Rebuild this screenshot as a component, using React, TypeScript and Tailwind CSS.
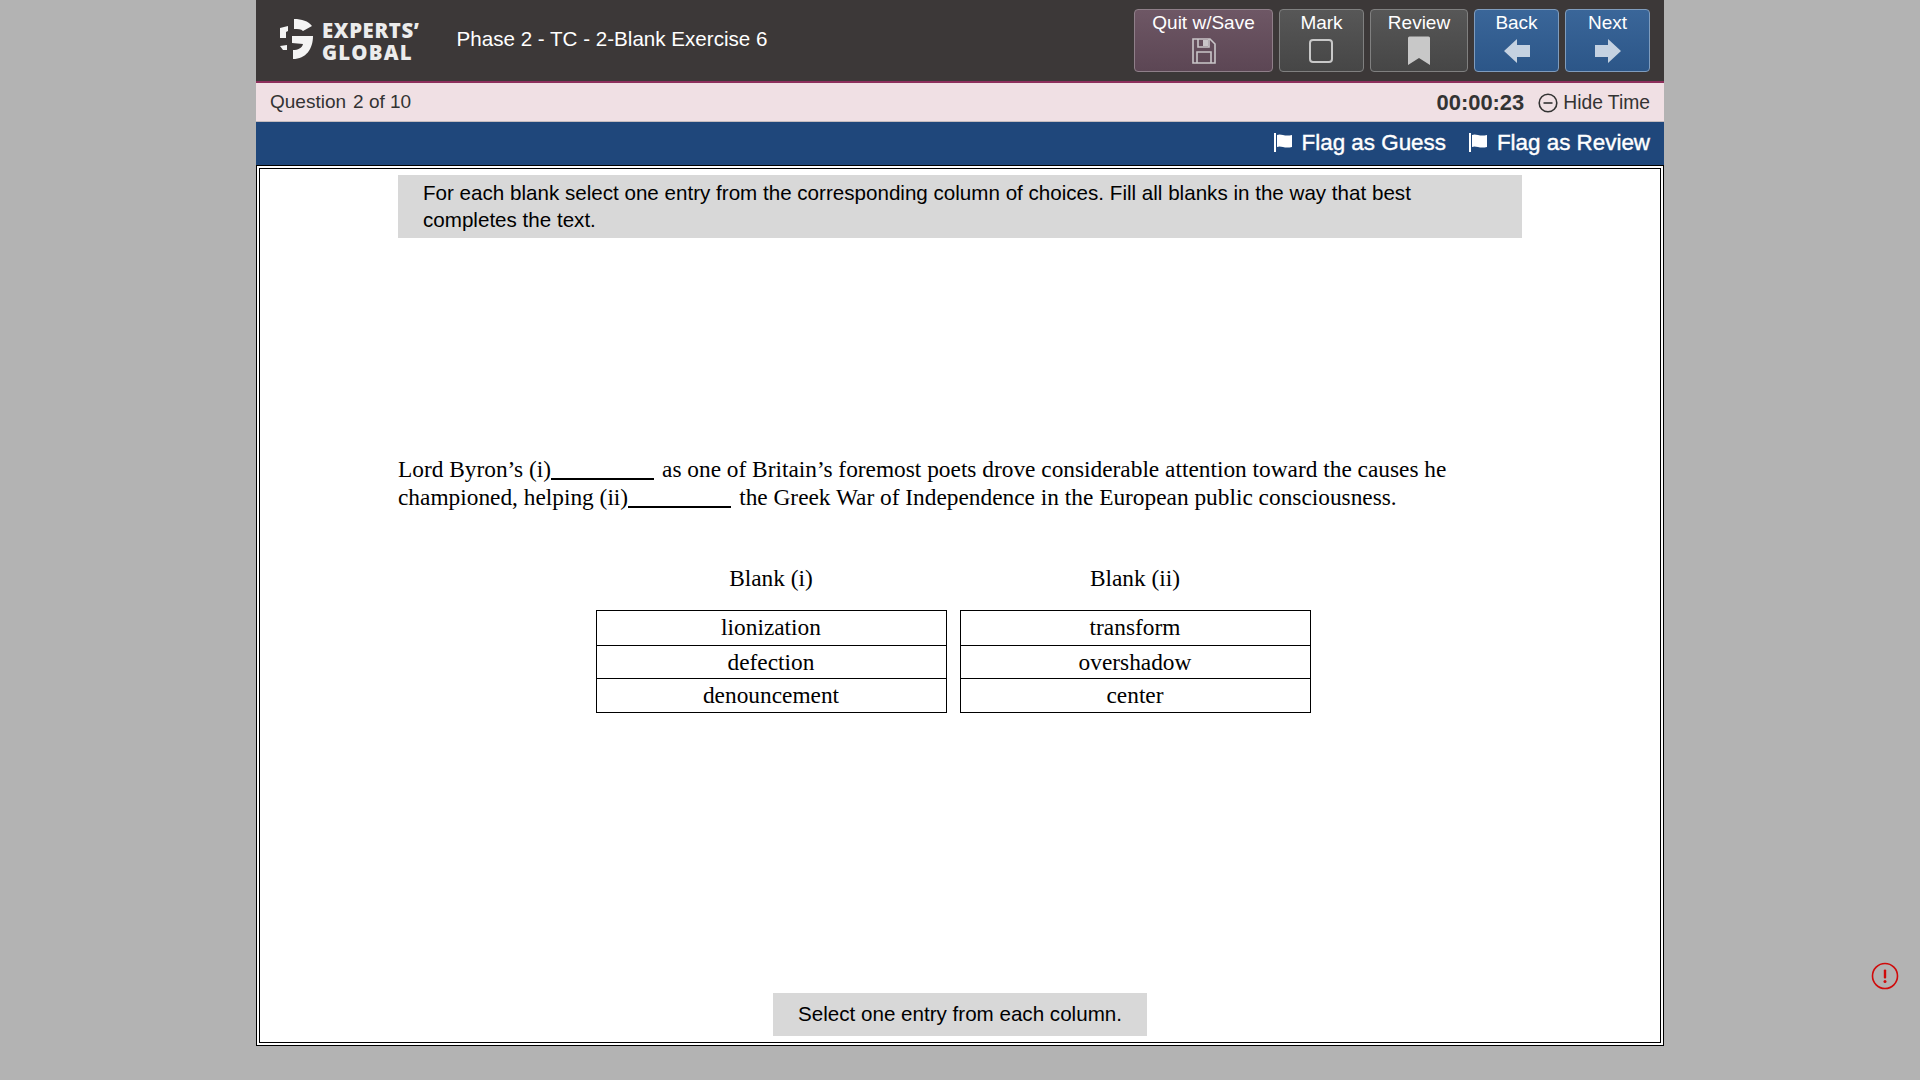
const Logo = () => (
  <div className="flex items-center gap-[8px]">
    <svg width="34" height="42" viewBox="0 0 34 42" fill="#f4f4f4">
      <path d="M14 1 C22 1 28 3 32 8 L23 13 C21 11 18 11 14 11 Z" />
      <path d="M0 10 L8 8 L8 13 L6 14 L6 20 L0 20 Z" />
      <path d="M12 18 L33 18 C33 31 26 41 13 41 L13 32 C18 32 22 30 23 26 L12 25 Z" />
      <path d="M0 28 L7 27 L7 32 L3 32 Z" />
    </svg>
    <div className="pt-[3px] font-['Open_Sans',sans-serif] text-[20.4px] font-extrabold leading-[22px] tracking-[0.6px] text-[#ececec]">
      <div>EXPERTS&rsquo;</div>
      <div className="tracking-[1.2px]">GLOBAL</div>
    </div>
  </div>
);

function HeaderButton({ label, width, blue, wine, children }: { label: string; width: string; blue?: boolean; wine?: boolean; children: React.ReactNode }) {
  const tone = blue
    ? 'bg-gradient-to-b from-[#3a6699] to-[#2c5688] border-[#7f9cbd]'
    : wine
      ? 'bg-gradient-to-b from-[#6e5765] to-[#5c4654] border-[#8f7f89]'
      : 'bg-gradient-to-b from-[#575757] to-[#464646] border-[#808080]';
  return (
    <div className={`${width} ${tone} flex h-[63px] flex-col items-center rounded-[4px] border pt-[2px] text-[19px] leading-[22px] text-white`}>
      <span>{label}</span>
      <div className="mt-[3px] flex h-[28px] items-center justify-center">{children}</div>
    </div>
  );
}

const Flag = () => (
  <svg width="20" height="20" viewBox="0 0 20 20" fill="#fff">
    <rect x="0" y="1" width="2" height="19" />
    <path d="M3 3 C7 1 10 5 18 3 L18 15 C10 17 7 13 3 15 Z" />
  </svg>
);

const rowsA = ['lionization', 'defection', 'denouncement'];
const rowsB = ['transform', 'overshadow', 'center'];

function Column({ title, rows }: { title: string; rows: string[] }) {
  return (
    <div className="w-[351px]">
      <div className="text-center leading-[28px]">{title}</div>
      <div className="mt-[18px] border border-black">
        {rows.map((r, i) => (
          <div key={r} className={`h-[33.7px] text-center leading-[33px] ${i > 0 ? 'border-t border-black' : ''}`}>
            {r}
          </div>
        ))}
      </div>
    </div>
  );
}

const Blank = () => <span className="mr-[8px] inline-block w-[103px] border-b-2 border-black align-[-3px]" />;

export default function App() {
  return (
    <div className="relative flex h-[1080px] justify-center bg-[#b3b3b3] font-['Liberation_Sans',Arial,sans-serif]">
      <div className="flex h-[1046px] w-[1408px] flex-col">
        <div className="flex h-[83px] shrink-0 items-start justify-between border-b-2 border-[#8d2f5c] bg-[#3c3838] pl-[24px] pr-[14px]">
          <div className="flex h-[78px] items-center">
            <Logo />
            <span className="ml-[37px] text-[20.6px] text-white">Phase 2 - TC - 2-Blank Exercise 6</span>
          </div>
          <div className="mt-[9px] flex gap-[6px]">
            <HeaderButton label="Quit w/Save" width="w-[139px]" wine>
              <svg width="24" height="26" viewBox="0 0 24 26" fill="none" stroke="#c9c5c8" strokeWidth="1.6">
                <path d="M1 1 H18 L23 6 V25 H1 Z" />
                <path d="M6 1 V9 H17 V1" />
                <rect x="11" y="2" width="5" height="6" fill="#c9c5c8" stroke="none" />
                <path d="M5 25 V14 H19 V25" />
              </svg>
            </HeaderButton>
            <HeaderButton label="Mark" width="w-[85px]">
              <div className="mr-[2px] h-[24px] w-[24px] rounded-[4px] border-2 border-[#c8c8c8]" />
            </HeaderButton>
            <HeaderButton label="Review" width="w-[98px]">
              <svg width="24" height="30" viewBox="0 0 24 30" fill="#c8c8c8">
                <path d="M1 2 a1.5 1.5 0 0 1 1.5 -1.5 H21.5 A1.5 1.5 0 0 1 23 2 V29 L12 22 L1 29 Z" />
              </svg>
            </HeaderButton>
            <HeaderButton label="Back" width="w-[85px]" blue>
              <svg width="26" height="24" viewBox="0 0 26 24" fill="#c5d2e1">
                <path d="M0 12 L13 0 V6 H26 V18 H13 V24 Z" />
              </svg>
            </HeaderButton>
            <HeaderButton label="Next" width="w-[85px]" blue>
              <svg width="26" height="24" viewBox="0 0 26 24" fill="#c5d2e1">
                <path d="M26 12 L13 0 V6 H0 V18 H13 V24 Z" />
              </svg>
            </HeaderButton>
          </div>
        </div>

        <div className="flex h-[39px] shrink-0 items-center justify-between border-b border-[#c4bcbf] bg-[#f0e0e4] px-[14px] text-[#333]">
          <span className="flex gap-[7px] text-[19px]"><span>Question</span><span>2 of 10</span></span>
          <div className="flex items-center pt-[3px]">
            <span className="text-[21.9px] font-bold tabular-nums">00:00:23</span>
            <svg className="ml-[14px]" width="20" height="20" viewBox="0 0 20 20" fill="none" stroke="#333" strokeWidth="1.6">
              <circle cx="10" cy="10" r="8.8" />
              <path d="M5.5 10 H14.5" />
            </svg>
            <span className="ml-[5px] text-[19.3px]">Hide Time</span>
          </div>
        </div>

        <div className="flex h-[43px] shrink-0 items-center justify-end gap-[23px] bg-[#1f477b] pb-[2px] pr-[14px] text-[22.4px] text-white [-webkit-text-stroke:0.4px_white]">
          <div className="flex items-center gap-[8px]"><Flag /><span>Flag as Guess</span></div>
          <div className="flex items-center gap-[8px]"><Flag /><span>Flag as Review</span></div>
        </div>

        <div className="flex min-h-0 flex-1 flex-col border border-black bg-white p-[2px]">
          <div className="flex min-h-0 flex-1 flex-col border border-black">
            <div className="ml-[138px] mt-[6px] w-[1124px] bg-[#d8d8d8] pb-[5px] pl-[25px] pr-[90px] pt-[4px] text-[20.6px] leading-[27px] text-black">
              For each blank select one entry from the corresponding column of choices. Fill all blanks in the way that best completes the text.
            </div>
            <p className="ml-[138px] mt-[217px] w-[1124px] font-['Liberation_Serif',serif] text-[23.35px] leading-[28px] text-black">
              Lord Byron&rsquo;s (i)<Blank />as one of Britain&rsquo;s foremost poets drove considerable attention toward the causes he championed, helping (ii)<Blank />the Greek War of Independence in the European public consciousness.
            </p>
            <div className="mt-[53px] flex justify-center gap-[13px] pr-[14px] font-['Liberation_Serif',serif] text-[23.35px] text-black">
              <Column title="Blank (i)" rows={rowsA} />
              <Column title="Blank (ii)" rows={rowsB} />
            </div>
            <div className="mx-auto mb-[6px] mt-auto flex h-[43px] w-[374px] items-center justify-center bg-[#d8d8d8] text-[20.6px] text-black">
              Select one entry from each column.
            </div>
          </div>
        </div>
      </div>

      <svg className="absolute left-[1871px] top-[962px]" width="28" height="28" viewBox="0 0 28 28" fill="none">
        <circle cx="14" cy="14" r="12.5" stroke="#d00b0b" strokeWidth="1.6" />
        <rect x="12.8" y="7.5" width="2.4" height="9" rx="1" fill="#d00b0b" />
        <circle cx="14" cy="19.5" r="1.5" fill="#d00b0b" />
      </svg>
    </div>
  );
}
